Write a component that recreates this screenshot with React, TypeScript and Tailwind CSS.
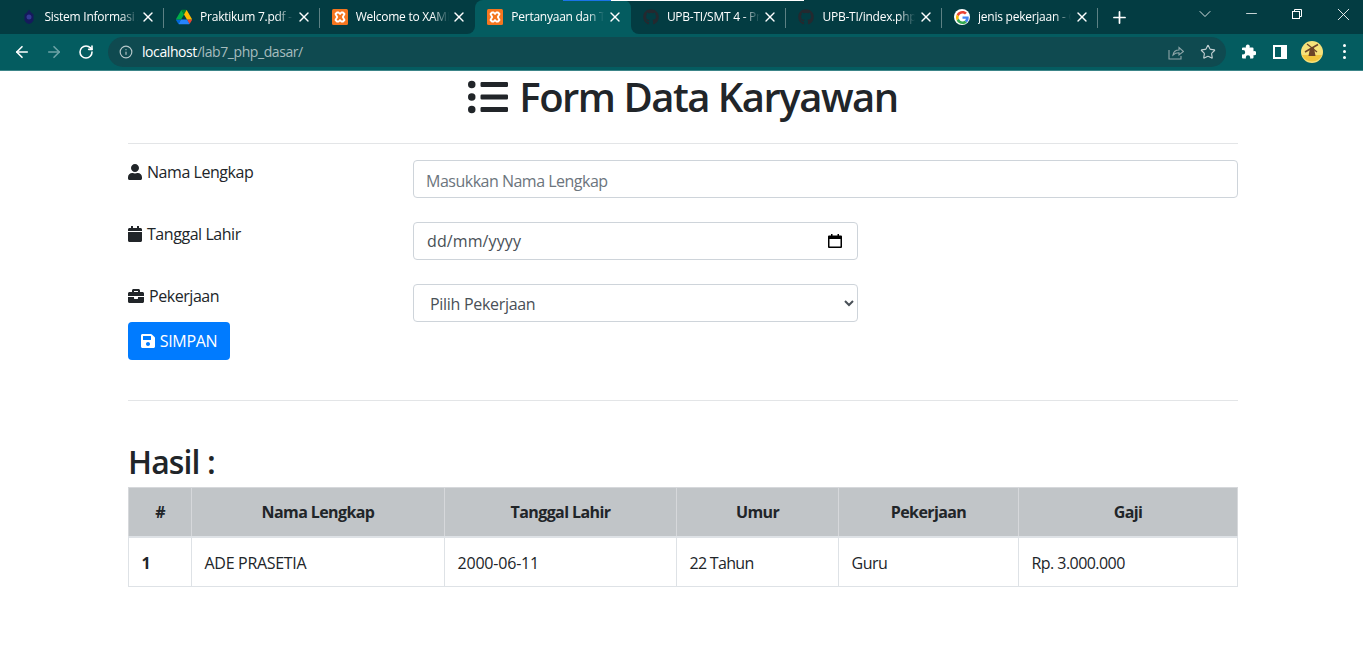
import React from 'react';
import { FaListUl, FaUser, FaCalendar, FaBriefcase, FaSave, FaGithub } from 'react-icons/fa';
import { ArrowLeft, ArrowRight, RotateCw, Info, Star, X, Plus, ChevronDown, Minus } from 'lucide-react';

const DriveIcon = () => (
    <svg viewBox="0 0 87.3 78" className="w-[16px] h-[16px]">
        <path d="M6.6 66.85l3.85 6.65c.8 1.4 1.95 2.5 3.3 3.3L27.5 53H0c0 1.55.4 3.1 1.2 4.5z" fill="#0066da" />
        <path d="M43.65 25L29.9 1.2c-1.35.8-2.5 1.9-3.3 3.3L1.2 48.5A9 9 0 0 0 0 53h27.5z" fill="#00ac47" />
        <path d="M73.55 76.8c1.35-.8 2.5-1.9 3.3-3.3l1.6-2.75 7.65-13.25c.8-1.4 1.2-2.95 1.2-4.5H59.8l5.85 11.5z" fill="#ea4335" />
        <path d="M43.65 25L57.4 1.2C56.05.4 54.5 0 52.9 0H34.4c-1.6 0-3.15.45-4.5 1.2z" fill="#00832d" />
        <path d="M59.8 53H27.5L13.75 76.8c1.35.8 2.9 1.2 4.5 1.2h50.8c1.6 0 3.15-.45 4.5-1.2z" fill="#2684fc" />
        <path d="M73.4 26.5L60.7 4.5c-.8-1.4-1.95-2.5-3.3-3.3L43.65 25 59.8 53h27.45c0-1.55-.4-3.1-1.2-4.5z" fill="#ffba00" />
    </svg>
);

const GoogleIcon = () => (
    <span className="w-[16px] h-[16px] rounded-full bg-white flex items-center justify-center">
        <svg viewBox="0 0 48 48" className="w-[13px] h-[13px]">
            <path fill="#EA4335" d="M24 9.5c3.5 0 6.7 1.2 9.2 3.6l6.9-6.9C35.9 2.4 30.5 0 24 0 14.6 0 6.5 5.4 2.6 13.2l8 6.2C12.5 13.7 17.8 9.5 24 9.5z" />
            <path fill="#4285F4" d="M46.9 24.5c0-1.6-.1-3.1-.4-4.5H24v9h12.9c-.6 3-2.2 5.5-4.7 7.2l7.7 6c4.5-4.2 7-10.3 7-17.7z" />
            <path fill="#FBBC05" d="M10.5 28.6c-.5-1.4-.8-3-.8-4.6s.3-3.2.8-4.6l-8-6.2C.9 16.4 0 20.1 0 24s.9 7.6 2.6 10.8z" />
            <path fill="#34A853" d="M24 48c6.5 0 11.9-2.1 15.9-5.8l-7.7-6c-2.2 1.5-5 2.3-8.2 2.3-6.2 0-11.5-4.2-13.4-9.9l-8 6.2C6.5 42.6 14.6 48 24 48z" />
        </svg>
    </span>
);

const XamppIcon = () => (
    <svg viewBox="0 0 16 16" className="w-[16px] h-[16px]">
        <rect width="16" height="16" rx="1.5" fill="#f5761f" />
        <path d="M5 3.5h1.7L8 5l1.3-1.5H11l1.5 1.5-1.7 3 1.700 3L11 12.5H9.3L8 11l-1.3 1.5H5L3.5 11l1.7-3-1.7-3z" fill="none" stroke="#fff" strokeWidth="1.8" strokeLinejoin="round" />
    </svg>
);

const CampusIcon = () => (
    <svg viewBox="0 0 16 16" className="w-[16px] h-[16px]">
        <path d="M8 0.5l2 3 2.5 2v6l-2 2.5-2.5 1-2.500-1-2-2.500v-6l2.500-2z" fill="#151a5c" />
        <circle cx="8" cy="8" r="2.5" fill="#343a94" />
    </svg>
);

type TabInfo = { title: string; icon: React.ReactNode; active?: boolean; sep?: boolean };

const tabs: TabInfo[] = [
    { title: 'Sistem Informasi Akademik', icon: <CampusIcon />, sep: true },
    { title: 'Praktikum 7.pdf - Google', icon: <DriveIcon />, sep: true },
    { title: 'Welcome to XAMPP', icon: <XamppIcon /> },
    { title: 'Pertanyaan dan Tugas', icon: <XamppIcon />, active: true },
    { title: 'UPB-TI/SMT 4 - Praktikum', icon: <FaGithub className="w-[16px] h-[16px] text-[#24292f]" />, sep: true },
    { title: 'UPB-TI/index.php at main', icon: <FaGithub className="w-[16px] h-[16px] text-[#24292f]" />, sep: true },
    { title: 'jenis pekerjaan - Google', icon: <GoogleIcon />, sep: true },
];

const Tab: React.FC<{ tab: TabInfo }> = ({ tab }) => (
    <div
        className={`relative w-[155.6px] h-full flex items-center pl-[12px] pr-[8px] shrink-0 ${
            tab.active ? 'bg-[#045c60] rounded-t-lg' : ''
        }`}
    >
        <span className="w-[16px] h-[16px] shrink-0 flex items-center justify-center">{tab.icon}</span>
        <span className="ml-[8px] w-[95px] overflow-hidden whitespace-nowrap text-[12px] tracking-[-0.25px] text-white [mask-image:linear-gradient(to_right,black_80%,transparent_98%)]">
            {tab.title}
        </span>
        <X className="ml-auto text-white" size={16} strokeWidth={2} />
        {tab.sep && <span className="absolute right-0 top-[8px] h-[20px] w-px bg-[#5d8184]" />}
        {tab.active && (
            <>
                <span className="absolute -left-[8px] bottom-0 w-[8px] h-[8px] bg-[#045c60]">
                    <span className="block w-full h-full bg-[#033c42] rounded-br-lg" />
                </span>
                <span className="absolute -right-[8px] bottom-0 w-[8px] h-[8px] bg-[#045c60]">
                    <span className="block w-full h-full bg-[#033c42] rounded-bl-lg" />
                </span>
            </>
        )}
    </div>
);

const ShareIcon = () => (
    <svg viewBox="0 0 16 16" className="w-[16px] h-[16px]" fill="none" stroke="#8fa6a9" strokeWidth="1.1">
        <path d="M1 6v9h12v-3" />
        <path d="M5 11c.5-3 3-5 6-5V3.5L15.5 7.5 11 11V8.8c-2.5 0-4.500.7-6 2.200z" />
    </svg>
);

const PuzzleIcon = () => (
    <svg viewBox="0 0 15 15" className="w-[15px] h-[15px]">
        <path
            d="M2 3.5h3a2 2 0 0 1-.2-1.200A2 2 0 0 1 6.800.5a2 2 0 0 1 2 1.800c0 .4-.1.800-.3 1.200h3a1 1 0 0 1 1 1v2.700a2 2 0 0 1 .8-.2 2.100 2.100 0 0 1 0 4.200 2 2 0 0 1-.8-.2v2.500a1 1 0 0 1-1 1H9c.1-.3.2-.6.2-1a2.200 2.200 0 0 0-4.400 0c0 .4.1.7.2 1H2a1 1 0 0 1-1-1v-3.200c.3.1.6.2 1 .2a2.200 2.200 0 0 0 0-4.400c-.4 0-.7.1-1 .2V4.500a1 1 0 0 1 1-1z"
            fill="#fff"
        />
    </svg>
);

const SidePanelIcon = () => (
    <svg viewBox="0 0 14 14" className="w-[14px] h-[14px]">
        <path fillRule="evenodd" d="M0 0h14v14H0zM2 2v10h6V2z" fill="#fff" />
    </svg>
);

const Avatar = () => (
    <svg viewBox="0 0 22 22" className="w-[22px] h-[22px]">
        <circle cx="11" cy="11" r="11" fill="#f6e27a" />
        <path d="M1 14h20a11 11 0 0 1-20 0z" fill="#f2c53d" />
        <path d="M9 7h4l1.5 8h-7z" fill="#6d4428" />
        <path d="M4 11L17 3.5" stroke="#6d4428" strokeWidth="1.5" />
        <path d="M6 3l10 8" stroke="#6d4428" strokeWidth="1.2" />
    </svg>
);

const BrowserChrome = () => (
    <div className="relative">
        <div className="absolute left-[563px] top-0 h-[1px] w-[241px] bg-white z-10">
            <div className="h-full w-[48px] bg-[#1a73e8]" />
        </div>
        <div className="h-[34px] bg-[#033c42] flex pl-[8.5px]">
            {tabs.map((t) => (
                <Tab key={t.title} tab={t} />
            ))}
            <div className="w-[44px] flex items-center justify-center">
                <Plus className="text-white" size={19} strokeWidth={2.2} />
            </div>
            <div className="ml-auto -mr-[3px] flex text-white">
                <div className="w-[46px] flex items-start pt-[4px] justify-center">
                    <ChevronDown size={20} strokeWidth={1} />
                </div>
                <div className="w-[46px] flex items-start pt-[5px] justify-center">
                    <Minus size={17} strokeWidth={1.1} />
                </div>
                <div className="w-[46px] flex items-start pt-[9px] justify-center">
                    <svg viewBox="0 0 10 10" className="w-[10px] h-[10px]" fill="none" stroke="#fff" strokeWidth="1">
                        <rect x="0.5" y="2.5" width="7" height="7" />
                        <path d="M2.5 2.5v-2h7v7h-2" />
                    </svg>
                </div>
                <div className="w-[46px] flex items-start pt-[4px] justify-center">
                    <X size={21} strokeWidth={1} />
                </div>
            </div>
        </div>
        <div className="h-[37px] bg-[#045c60] border-b border-[#3c8588] flex items-center pl-[6px] pr-[3px] pb-[1px]">
            <div className="w-[32px] flex justify-center text-white">
                <ArrowLeft size={18} strokeWidth={2.2} />
            </div>
            <div className="w-[32px] flex justify-center text-[#6da3a6]">
                <ArrowRight size={18} strokeWidth={2.2} />
            </div>
            <div className="w-[32px] flex justify-center text-white">
                <RotateCw size={16} strokeWidth={2.4} />
            </div>
            <div className="ml-[6px] flex-1 h-[30px] rounded-full bg-[#0f4a50] flex items-center pl-[11px] pr-[10px]">
                <Info className="text-[#b6c7c9]" size={14} strokeWidth={2} />
                <span className="ml-[9px] text-[14px] text-[#a6bcbe] tracking-[-0.42px]">
                    <span className="text-white font-medium">localhost</span>/lab7_php_dasar/
                </span>
                <div className="ml-auto flex items-center gap-[16px]">
                    <ShareIcon />
                    <Star className="text-[#c3d0d2]" size={16} strokeWidth={1.7} />
                </div>
            </div>
            <div className="ml-[6px] flex items-center">
                <div className="w-[32px] flex justify-center">
                    <PuzzleIcon />
                </div>
                <div className="w-[32px] flex justify-center items-center">
                    <SidePanelIcon />
                </div>
                <div className="w-[32px] flex justify-center">
                    <Avatar />
                </div>
                <div className="w-[32px] flex flex-col items-center justify-center gap-[3px]">
                    <span className="w-[3px] h-[3px] rounded-full bg-white" />
                    <span className="w-[3px] h-[3px] rounded-full bg-white" />
                    <span className="w-[3px] h-[3px] rounded-full bg-white" />
                </div>
            </div>
        </div>
    </div>
);

const cols = [63, 253, 232, 162, 180, 219];
const heads = ['#', 'Nama Lengkap', 'Tanggal Lahir', 'Umur', 'Pekerjaan', 'Gaji'];
const cells = [
    { text: '1', cls: 'font-bold' },
    { text: 'ADE PRASETIA', cls: 'tracking-[-0.3px]' },
    { text: '2000-06-11', cls: 'tracking-[-0.2px]' },
    { text: '22 Tahun', cls: 'tracking-[-0.7px]' },
    { text: 'Guru', cls: 'tracking-[-0.5px]' },
    { text: 'Rp. 3.000.000', cls: 'tracking-[-0.55px]' },
];

const App: React.FC = () => {
    return (
        <div className="min-h-screen bg-white text-[#212529] font-['Open_Sans','Liberation_Sans',sans-serif] overflow-hidden">
            <BrowserChrome />
            <div className="ml-[128px] w-[1110px]">
                <h1 className="mt-[2px] flex items-center justify-center text-[40px] leading-[48px] font-semibold tracking-[-1.5px]">
                    <FaListUl className="w-[40px] h-[40px] mr-[11px]" />
                    Form Data Karyawan
                </h1>
                <hr className="mt-[22px] border-[#e3e5e7]" />

                <div className="mt-[16px] flex">
                    <label className="w-[285px] h-[38px] leading-[24px] flex items-start tracking-[-0.45px]">
                        <span className="h-[24px] flex items-center"><FaUser className="w-[14px] h-[16px] mr-[5px]" /></span>
                        Nama Lengkap
                    </label>
                    <input
                        className="flex-1 h-[38px] border border-[#ced4da] rounded px-[12px] pt-[3px] text-[16px] tracking-[-0.5px] placeholder:text-[#6c757d]"
                        placeholder="Masukkan Nama Lengkap"
                    />
                </div>

                <div className="mt-[24px] flex">
                    <label className="w-[285px] h-[38px] leading-[24px] flex items-start tracking-[-0.45px]">
                        <span className="h-[24px] flex items-center"><FaCalendar className="w-[14px] h-[16px] mr-[5px]" /></span>
                        Tanggal Lahir
                    </label>
                    <div className="w-[445px] h-[38px] border border-[#ced4da] rounded pl-[13px] pr-[15px] flex items-center justify-between text-[#495057] tracking-[0.1px]">
                        dd/mm/yyyy
                        <svg viewBox="0 0 14 14" className="w-[14px] h-[14px]">
                            <path fillRule="evenodd" d="M3 0h1.5v1.5h5V0H11v1.5h2a1 1 0 0 1 1 1V13a1 1 0 0 1-1 1H1a1 1 0 0 1-1-1V2.5a1 1 0 0 1 1-1h2zM1.5 5v7.5h11V5z" fill="#000" />
                        </svg>
                    </div>
                </div>

                <div className="mt-[24px] flex">
                    <label className="w-[285px] h-[38px] leading-[24px] flex items-start tracking-[-0.45px]">
                        <span className="h-[24px] flex items-center"><FaBriefcase className="w-[16px] h-[16px] mr-[5px]" /></span>
                        Pekerjaan
                    </label>
                    <select className="w-[445px] h-[38px] border border-[#ced4da] rounded px-[12px] pt-[1px] bg-white text-[#495057] tracking-[-0.3px]">
                        <option>Pilih Pekerjaan</option>
                    </select>
                </div>

                <button className="w-[102px] h-[38px] bg-[#007bff] text-white rounded flex items-center justify-center tracking-[-0.3px]">
                    <FaSave className="w-[14px] h-[16px] mr-[5px]" />
                    SIMPAN
                </button>

                <hr className="mt-[40px] border-[#e3e5e7]" />

                <h2 className="mt-[42px] mb-[6px] text-[32px] leading-[38px] font-semibold tracking-[-0.9px]">Hasil :</h2>

                <table className="w-[1109px] table-fixed border-collapse">
                    <colgroup>
                        {cols.map((w, i) => (
                            <col key={i} style={{ width: w }} />
                        ))}
                    </colgroup>
                    <thead>
                        <tr className="bg-[#c1c5c8]">
                            {heads.map((h) => (
                                <th key={h} className="h-[49px] border border-[#d6d8db] border-b-2 border-b-[#dee2e6] text-center font-bold tracking-[-0.6px]">
                                    {h}
                                </th>
                            ))}
                        </tr>
                    </thead>
                    <tbody>
                        <tr>
                            {cells.map((c) => (
                                <td key={c.text} className={`h-[50px] border border-[#dee2e6] px-[12.5px] pt-[2px] ${c.cls}`}>
                                    {c.text}
                                </td>
                            ))}
                        </tr>
                    </tbody>
                </table>
            </div>
        </div>
    );
};

export default App;
